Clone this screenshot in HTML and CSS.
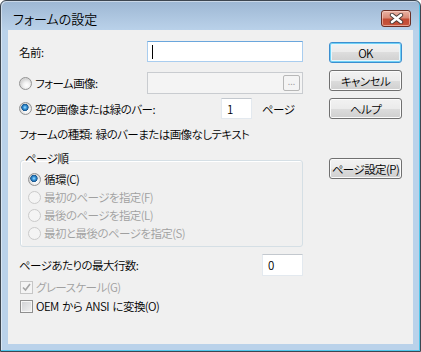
FILE: index.html
```html
<!DOCTYPE html>
<html lang="ja">
<head>
<meta charset="utf-8">
<title>フォームの設定</title>
<link rel="stylesheet" href="styles.css">
</head>
<body>
<div class="window">
  <div class="titlebar">
    <span class="title">フォームの設定</span>
    <div class="close">
      <svg width="15" height="11" viewBox="0 0 15 11">
        <path d="M3 2 L12 9 M12 2 L3 9" stroke="#4a3a36" stroke-width="4.4" stroke-linecap="round"/>
        <path d="M3 2 L12 9 M12 2 L3 9" stroke="#ffffff" stroke-width="2.6" stroke-linecap="round"/>
      </svg>
    </div>
  </div>
  <div class="client">
    <div class="left">
      <div class="row row-name">
        <span class="label">名前:</span>
        <div class="edit focus wide"><span class="caret"></span></div>
      </div>
      <div class="row row-img">
        <span class="radio"></span><span class="label">フォーム画像:</span>
        <div class="edit disabled wide"><span class="browse">...</span></div>
      </div>
      <div class="row row-blank">
        <div class="opt"><span class="radio checked"></span><span class="label">空の画像または緑のバー:</span></div>
        <div class="edit small"><span class="val">1</span></div>
        <span class="label pages">ページ</span>
      </div>
      <div class="kind">フォームの種類: 緑のバーまたは画像なしテキスト</div>
      <fieldset class="group">
        <legend>ページ順</legend>
        <div class="grow"><span class="radio checked"></span><span class="label">循環(C)</span></div>
        <div class="grow dim"><span class="radio off"></span><span class="label">最初のページを指定(F)</span></div>
        <div class="grow dim"><span class="radio off"></span><span class="label">最後のページを指定(L)</span></div>
        <div class="grow dim"><span class="radio off"></span><span class="label">最初と最後のページを指定(S)</span></div>
      </fieldset>
      <div class="row row-max">
        <span class="label">ページあたりの最大行数:</span>
        <div class="edit num"><span class="val">0</span></div>
      </div>
      <div class="crow crow-gray dim">
        <span class="check off">
          <svg width="11" height="11" viewBox="0 0 11 11"><path d="M2 5.5 L4.5 8 L9 2" fill="none" stroke="#a4a4a4" stroke-width="1.6"/></svg>
        </span>
        <span class="label">グレースケール(G)</span>
      </div>
      <div class="crow crow-oem">
        <span class="check"></span>
        <span class="label">OEM から ANSI に変換(O)</span>
      </div>
    </div>
    <div class="right">
      <div class="btn default">OK</div>
      <div class="btn">キャンセル</div>
      <div class="btn">ヘルプ</div>
      <div class="btn setup">ページ設定(P)</div>
    </div>
  </div>
</div>
</body>
</html>
```

FILE: styles.css
```css
html, body {
  margin: 0;
  padding: 0;
  background: #ffffff;
}

body {
  font-family: "Noto Sans CJK JP", "Noto Sans", sans-serif;
  font-size: 11.5px;
  font-weight: 350;
  letter-spacing: -0.55px;
  word-spacing: 1.5px;
  font-feature-settings: "palt";
  color: #000000;
}

.window {
  width: 421px;
  height: 352px;
  box-sizing: border-box;
  border: 1px solid #3d4650;
  border-radius: 6px 6px 0 0;
  background: linear-gradient(#9db7d3 0px, #b3cbe4 22px, #bad2ea 30px, #bad2ea 100%);
  box-shadow: inset -1px -1px 0 #4fc6ea, inset 1px 1px 0 rgba(255,255,255,0.45);
  display: flex;
  flex-direction: column;
}

.titlebar {
  height: 29px;
  display: flex;
  align-items: flex-start;
  padding-left: 12px;
  padding-right: 9px;
}

.title {
  margin-top: 10px;
  line-height: 16px;
  font-size: 13px;
  letter-spacing: 0;
  color: #000;
}

.close {
  margin-left: auto;
  margin-top: 9px;
  width: 30px;
  height: 17px;
  box-sizing: border-box;
  border: 1px solid #6b2e25;
  border-radius: 3px;
  background: linear-gradient(#eab3a5 0%, #d98b78 45%, #c24b34 55%, #c8553c 100%);
  box-shadow: inset 0 0 0 1px rgba(255,220,210,0.55);
  display: flex;
  align-items: center;
  justify-content: center;
}

.client {
  margin: 0 7px;
  height: 314px;
  background: #f0f0f0;
  display: flex;
  padding: 11px 11px 0 11px;
  box-sizing: border-box;
}

.left {
  width: 284px;
  display: flex;
  flex-direction: column;
}

.right {
  margin-left: auto;
  width: 73px;
  padding-top: 1px;
  display: flex;
  flex-direction: column;
}

.row {
  display: flex;
  align-items: center;
}

.label {
  line-height: 16px;
  white-space: nowrap;
}

.row-name { height: 21px; }
.row-img { height: 22px; margin-top: 10px; }
.row-blank { height: 21px; margin-top: 4px; }
.row-max { height: 22px; margin-top: 7px; }

.opt {
  width: 202px;
  display: flex;
  align-items: center;
}

.pages { margin-left: 10px; }

.edit {
  box-sizing: border-box;
  height: 100%;
  background: #ffffff;
  border: 1px solid #e3e9ef;
  border-top-color: #c3c8ce;
  display: flex;
  align-items: center;
}

.edit.wide {
  width: 156px;
  margin-left: auto;
}

.edit.focus {
  border-color: #a9cdef;
  border-top-color: #6aa6dc;
}

.caret {
  width: 1px;
  height: 14px;
  background: #000;
  margin-left: 4px;
}

.edit.disabled {
  background: #f4f4f4;
  border-color: #c9ccd0;
  justify-content: flex-end;
  padding-right: 2px;
}

.browse {
  width: 17px;
  height: 16px;
  box-sizing: border-box;
  border: 1px solid #b7b7b7;
  border-radius: 2px;
  background: #f4f4f4;
  color: #a0a0a0;
  font-size: 9px;
  letter-spacing: 0;
  line-height: 12px;
  text-align: center;
}

.edit.small { width: 31px; }
.edit.num { width: 41px; margin-left: auto; }

.val {
  margin-left: 5px;
  line-height: 16px;
}

.radio {
  width: 13px;
  height: 13px;
  box-sizing: border-box;
  border-radius: 50%;
  border: 1px solid #939393;
  background: radial-gradient(circle at 60% 65%, #ffffff 0, #f2f2f2 3px, #d6d6d6 6px);
  margin-right: 3px;
  flex: none;
}

.radio.checked {
  background:
    radial-gradient(circle at 45% 40%, #a8e4ff 0, #3b9ae0 1.6px, #16548c 3.4px, rgba(22,84,140,0) 3.9px),
    radial-gradient(circle at 60% 65%, #ffffff 0, #f2f2f2 3px, #d6d6d6 6px);
}

.radio.off {
  border-color: #cacaca;
  background: #f4f4f4;
}

.kind {
  margin-top: 7px;
  line-height: 16px;
  white-space: nowrap;
}

.group {
  margin: 8px 0 0 1px;
  width: 283px;
  box-sizing: border-box;
  border: 1px solid #d5dfe5;
  border-radius: 3px;
  padding: 0 0 4px 7px;
  box-shadow: inset 1px 1px 0 #ffffff;
}

.group legend {
  padding: 0 1px 4px 1px;
  margin-left: -4px;
  line-height: 16px;
}

.grow {
  height: 18px;
  display: flex;
  align-items: center;
}

.dim { color: #a0a0a0; }

.crow {
  height: 18px;
  display: flex;
  align-items: center;
  padding-left: 1px;
}

.crow-gray { margin-top: 2px; }
.crow-oem { margin-top: 1px; }

.check {
  width: 13px;
  height: 13px;
  box-sizing: border-box;
  border: 1px solid #8f8f8f;
  background: linear-gradient(135deg, #cfd1d4 0%, #f2f2f2 100%);
  box-shadow: inset 0 0 0 1px #f6f6f6;
  margin-right: 3px;
  display: flex;
  align-items: center;
  justify-content: center;
}

.check.off {
  border-color: #c6c6c6;
  background: #f4f4f4;
  box-shadow: none;
}

.btn {
  height: 21px;
  box-sizing: border-box;
  border: 1px solid #707070;
  border-radius: 3px;
  background: linear-gradient(#f2f2f2 0%, #ebebeb 50%, #dddddd 50%, #cfcfcf 100%);
  box-shadow: inset 0 0 0 1px #fbfbfb;
  display: flex;
  align-items: center;
  justify-content: center;
  line-height: 16px;
  white-space: nowrap;
  margin-top: 7px;
}

.btn.default {
  margin-top: 0;
  border-color: #3c8fd0;
  box-shadow: inset 0 0 0 1px #6fd0f5, inset 0 0 0 2px #e8f6fc;
}

.btn.setup {
  margin-top: 39px;
}
```
